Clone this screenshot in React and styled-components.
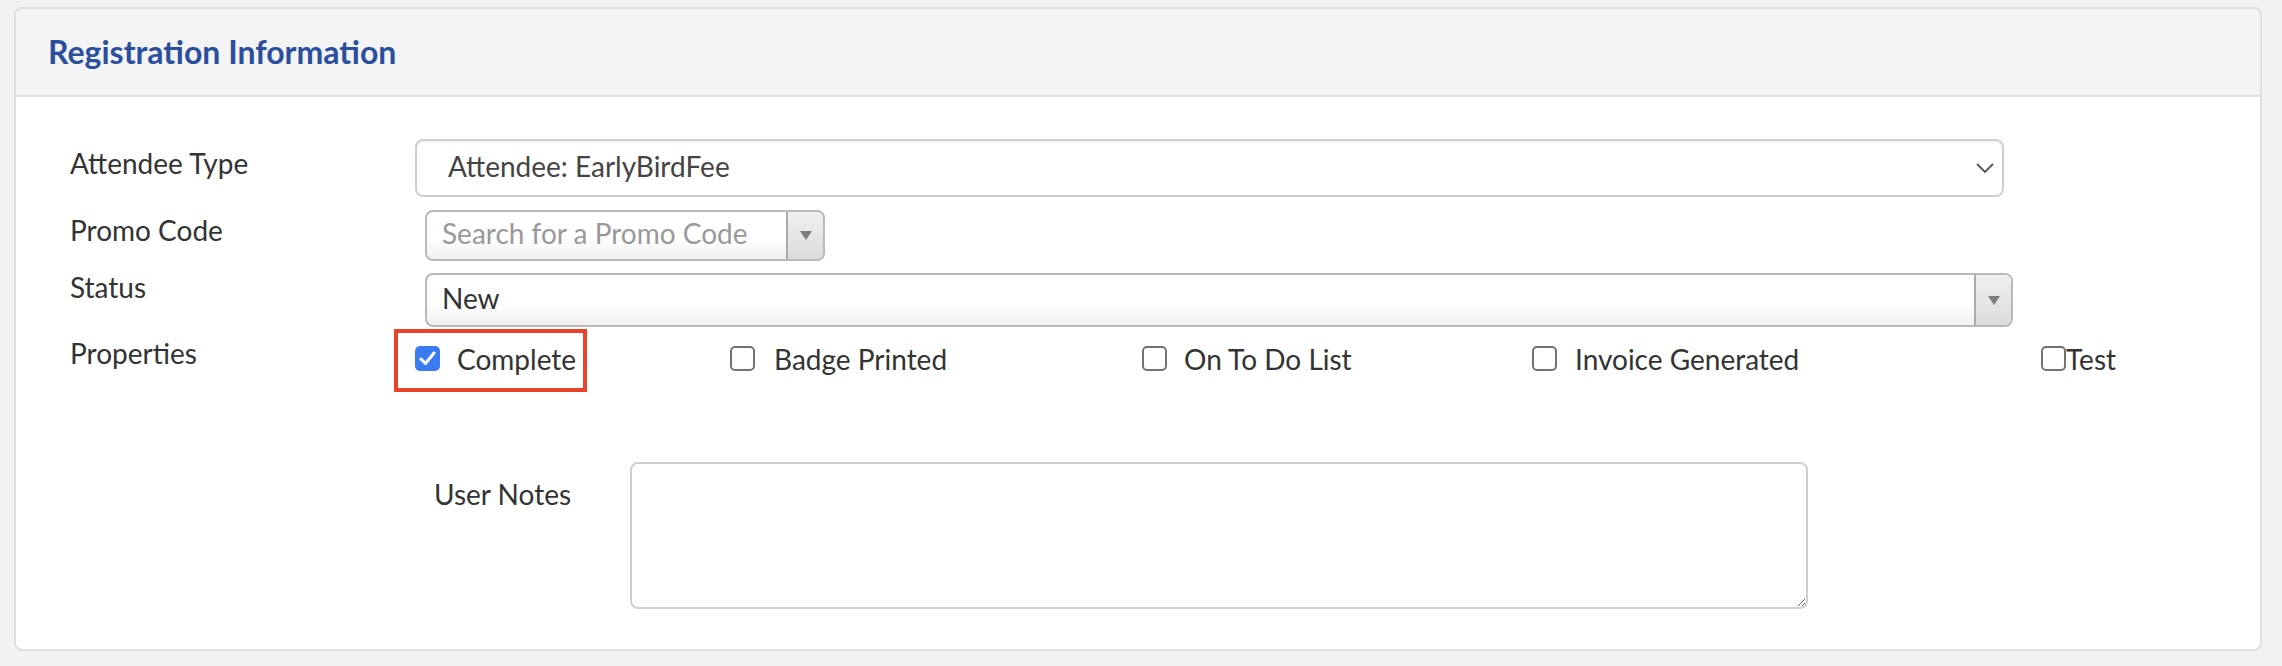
import React from "react";
import styled, { createGlobalStyle } from "styled-components";

const GlobalStyle = createGlobalStyle`
  html, body {
    margin: 0;
    padding: 0;
    background: #f2f2f2;
    font-family: Lato, "Open Sans", "Liberation Sans", sans-serif;
    color: #333;
  }
`;

const properties = [
  { label: "Complete", checked: true, width: 315, gap: 17, highlight: true },
  { label: "Badge Printed", width: 412, gap: 19 },
  { label: "On To Do List", width: 390, gap: 17 },
  { label: "Invoice Generated", width: 509, gap: 18 },
  { label: "Test", gap: 0 },
];

export default function App() {
  return (
    <>
      <GlobalStyle />
      <Panel>
        <Header>
          <Title>Registration Information</Title>
        </Header>
        <Body>
          <Row $mt={0}>
            <Label $pt={10}>Attendee Type</Label>
            <NativeSelect>
              <span>Attendee: EarlyBirdFee</span>
              <svg width="18" height="10" viewBox="0 0 18 10">
                <path d="M1 1 L9 9 L17 1" fill="none" stroke="#555" strokeWidth="1.8" />
              </svg>
            </NativeSelect>
          </Row>

          <Row $mt={13}>
            <Label $pt={6}>Promo Code</Label>
            <Combo $width={400} $height={51}>
              <ComboText $placeholder>Search for a Promo Code</ComboText>
              <ComboButton>
                <Triangle />
              </ComboButton>
            </Combo>
          </Row>

          <Row $mt={12}>
            <Label $pt={0}>Status</Label>
            <Combo $width={1588} $height={54}>
              <ComboText>New</ComboText>
              <ComboButton>
                <Triangle />
              </ComboButton>
            </Combo>
          </Row>

          <Row $mt={2}>
            <Label $pt={10}>Properties</Label>
            <CheckGrid>
              {properties.map((p) => (
                <CheckItem key={p.label} $width={p.width} $gap={p.gap}>
                  {p.highlight && <Highlight />}
                  <Box $checked={p.checked}>
                    {p.checked && (
                      <svg width="17" height="15" viewBox="0 0 17 15">
                        <path
                          d="M2 8 L6.5 12.5 L15 2"
                          fill="none"
                          stroke="#fff"
                          strokeWidth="3"
                          strokeLinecap="round"
                          strokeLinejoin="round"
                        />
                      </svg>
                    )}
                  </Box>
                  <span>{p.label}</span>
                </CheckItem>
              ))}
            </CheckGrid>
          </Row>

          <NotesRow>
            <NotesLabel>User Notes</NotesLabel>
            <Notes />
          </NotesRow>
        </Body>
      </Panel>
    </>
  );
}

const Panel = styled.div`
  margin: 7px 20px 0 14px;
  background: #fff;
  border: 2px solid #dedede;
  border-radius: 8px;
  overflow: hidden;
`;

const Header = styled.div`
  height: 86px;
  display: flex;
  align-items: center;
  padding-left: 32px;
  background: #f4f4f4;
  border-bottom: 2px solid #dedede;
`;

const Title = styled.h2`
  margin: 0 0 2px;
  font-size: 32px;
  font-weight: 700;
  color: #2a4f9e;
`;

const Body = styled.div`
  padding: 42px 0 40px 54px;
`;

const Row = styled.div`
  display: flex;
  align-items: flex-start;
  margin-top: ${(p) => p.$mt}px;
`;

const Label = styled.div`
  flex: 0 0 345px;
  padding-top: ${(p) => p.$pt}px;
  font-size: 28px;
  line-height: 28px;
  color: #333;
`;

const NativeSelect = styled.div`
  width: 1589px;
  height: 58px;
  box-sizing: border-box;
  display: flex;
  align-items: center;
  justify-content: space-between;
  padding: 0 8px 4px 31px;
  border: 2px solid #cfcfcf;
  border-radius: 8px;
  box-shadow: inset 0 2px 2px rgba(0, 0, 0, 0.04);
  font-size: 28px;
  color: #444;

  svg {
    margin-top: 4px;
  }
`;

const Combo = styled.div`
  margin-left: 10px;
  width: ${(p) => p.$width}px;
  height: ${(p) => p.$height}px;
  box-sizing: border-box;
  display: flex;
  border: 2px solid #b9b9b9;
  border-radius: 8px;
  overflow: hidden;
  background: linear-gradient(#fff 55%, #f0f0f0 100%);
`;

const ComboText = styled.div`
  flex: 1;
  display: flex;
  align-items: center;
  padding: 0 0 5px 15px;
  font-size: 28px;
  color: ${(p) => (p.$placeholder ? "#999" : "#333")};
`;

const ComboButton = styled.div`
  flex: 0 0 35px;
  display: flex;
  align-items: center;
  justify-content: center;
  border-left: 2px solid #ababab;
  background: linear-gradient(#efefef, #dcdcdc);
`;

const Triangle = styled.span`
  width: 0;
  height: 0;
  border-left: 6px solid transparent;
  border-right: 6px solid transparent;
  border-top: 9px solid #7d7d7d;
`;

const CheckGrid = styled.div`
  display: flex;
  align-items: center;
  height: 63px;
`;

const CheckItem = styled.label`
  position: relative;
  display: flex;
  align-items: center;
  gap: ${(p) => p.$gap}px;
  height: 63px;
  box-sizing: border-box;
  padding-bottom: 4px;
  width: ${(p) => (p.$width ? `${p.$width}px` : "auto")};
  flex: none;
  font-size: 28px;
  color: #333;
`;

const Highlight = styled.span`
  position: absolute;
  left: -21px;
  top: 0;
  width: 193px;
  height: 63px;
  box-sizing: border-box;
  border: 4px solid #e9432b;
`;

const Box = styled.span`
  width: 25px;
  height: 25px;
  box-sizing: border-box;
  border-radius: 5px;
  display: flex;
  align-items: center;
  justify-content: center;
  flex: none;
  background: ${(p) => (p.$checked ? "#3a7bf2" : "#fff")};
  border: ${(p) => (p.$checked ? "none" : "2px solid #727272")};
`;

const NotesRow = styled.div`
  display: flex;
  align-items: flex-start;
  margin: 70px 0 0 364px;
`;

const NotesLabel = styled.div`
  flex: 0 0 196px;
  padding-top: 18px;
  font-size: 28px;
  line-height: 28px;
  color: #333;
`;

const Notes = styled.textarea`
  width: 1178px;
  height: 147px;
  box-sizing: border-box;
  margin: 0;
  border: 2px solid #cfcfcf;
  border-radius: 8px;
  font-family: inherit;
  font-size: 26px;
`;
